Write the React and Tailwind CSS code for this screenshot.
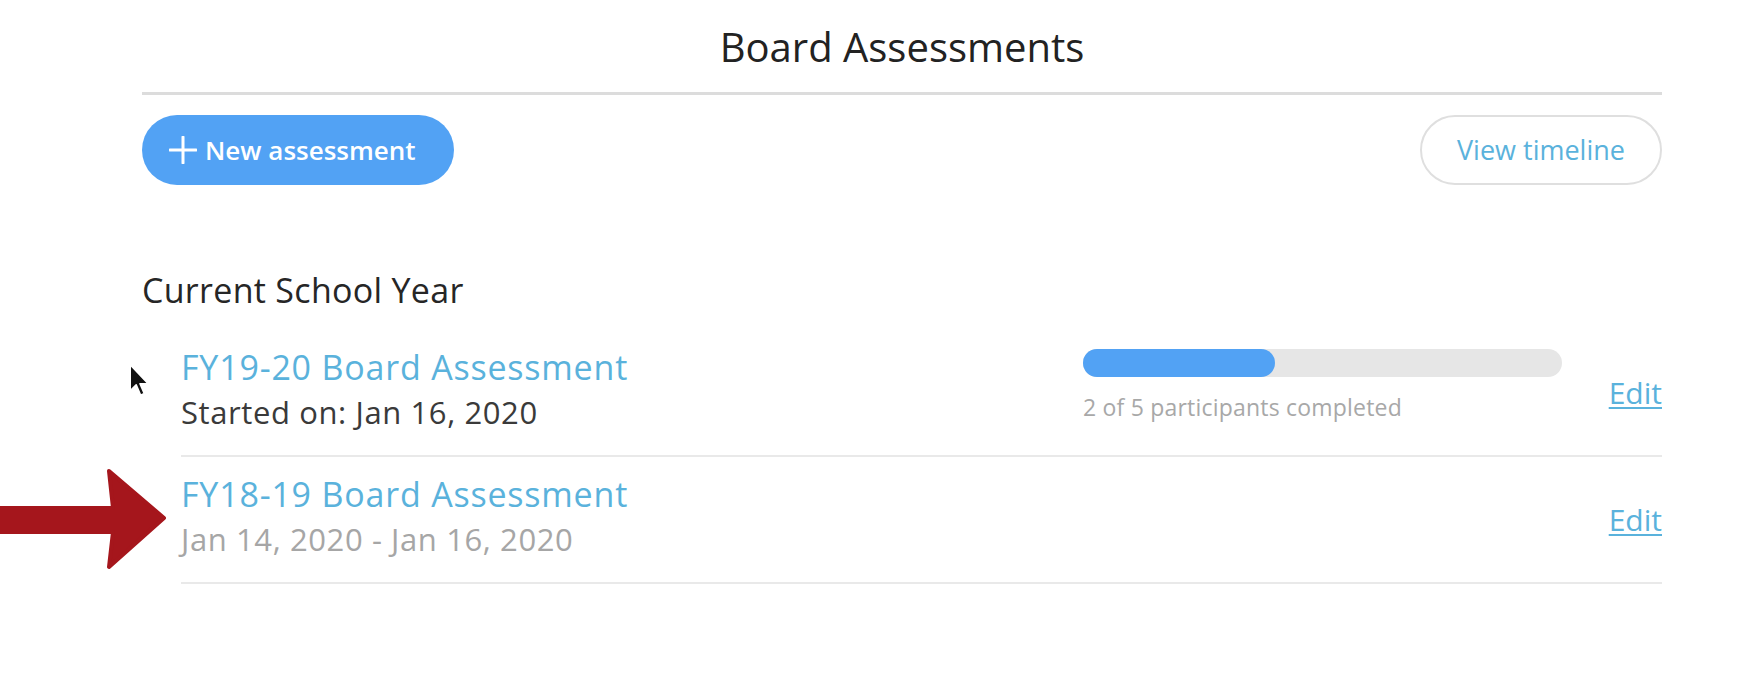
import React from 'react';

const FONT = { fontFamily: '"Open Sans", "Noto Sans", sans-serif' };

const ASSESSMENTS = [
  {
    id: 'fy1920',
    title: 'FY19-20 Board Assessment',
    subtitle: 'Started on: Jan 16, 2020',
    active: true,
    done: 2,
    total: 5,
  },
  {
    id: 'fy1819',
    title: 'FY18-19 Board Assessment',
    subtitle: 'Jan 14, 2020 - Jan 16, 2020',
    active: false,
  },
];

const PlusIcon = () => (
  <svg width="28" height="28" viewBox="0 0 28 28" className="shrink-0">
    <path d="M14 1v26M1 14h26" stroke="white" strokeWidth="3" strokeLinecap="round" />
  </svg>
);

const Cursor = () => (
  <svg className="absolute left-[128px] top-[362px]" width="24" height="38" viewBox="0 0 22 34">
    <path
      d="M2 2 L2 26 L7.5 20.5 L11.5 30 L15 28.5 L11 19.5 L18.5 19.5 Z"
      fill="#111"
      stroke="#fff"
      strokeWidth="1.5"
      strokeLinejoin="round"
    />
  </svg>
);

const RedArrow = () => (
  <svg className="absolute left-0 top-[466px]" width="172" height="106" viewBox="0 0 172 106">
    <path
      d="M-4 42 L113 42 L109 5 L164 52 L109 101 L113 66 L-4 66 Z"
      fill="#a5161c"
      stroke="#a5161c"
      strokeWidth="4"
      strokeLinejoin="round"
    />
  </svg>
);

const AssessmentRow = ({ item }) => (
  <div className="flex items-center border-b-2 border-[#e9e9e9]">
    <div className="flex-1 pt-[15px] pb-[23px]">
      <div className="text-[34px] leading-[44px] tracking-[0.8px] text-[#5ab2dc]">{item.title}</div>
      <div
        className={`mt-[3px] text-[31px] leading-[40px] tracking-[0.6px] ${
          item.active ? 'text-[#3a3a3a]' : 'text-[#a6a6a6]'
        }`}
      >
        {item.subtitle}
      </div>
    </div>
    {item.active ? (
      <div className="w-[479px] self-start mt-[19px]">
        <div className="h-[28px] w-full rounded-full bg-[#e6e6e6]">
          <div
            className="h-full rounded-full bg-[#52a2f4]"
            style={{ width: `${(item.done / item.total) * 100}%` }}
          />
        </div>
        <div className="mt-[15px] text-[23px] leading-[30px] tracking-[0.2px] text-[#a8a8a8]">
          {item.done} of {item.total} participants completed
        </div>
      </div>
    ) : (
      <div className="w-[479px]" />
    )}
    <div className="w-[100px] text-right">
      <a className="text-[30px] leading-[36px] text-[#5ab2dc] underline underline-offset-[3px] decoration-2">
        Edit
      </a>
    </div>
  </div>
);

export default function App() {
  return (
    <div className="relative w-[1744px] h-[680px] bg-white overflow-hidden" style={FONT}>
      <div className="ml-[142px] w-[1520px]">
        <h1 className="pt-[23px] text-center text-[40px] leading-[48px] font-medium text-[#222]">
          Board Assessments
        </h1>
        <div className="mt-[21px] h-[3px] bg-[#dcdcdc]" />

        <div className="mt-[20px] flex items-center justify-between">
          <button className="flex h-[70px] w-[312px] items-center gap-[8px] rounded-full bg-[#52a2f4] pl-[27px] text-[26px] font-semibold text-white">
            <PlusIcon />
            <span>New assessment</span>
          </button>
          <button className="h-[70px] w-[242px] rounded-full border-2 border-[#dfdfdf] text-[27px] font-medium text-[#5ab2dc]">
            View timeline
          </button>
        </div>

        <h2 className="mt-[85px] text-[34px] leading-[40px] tracking-[0.3px] text-[#262626]">
          Current School Year
        </h2>

        <div className="mt-[20px] ml-[39px]">
          {ASSESSMENTS.map((item) => (
            <AssessmentRow key={item.id} item={item} />
          ))}
        </div>
      </div>

      <Cursor />
      <RedArrow />
    </div>
  );
}
